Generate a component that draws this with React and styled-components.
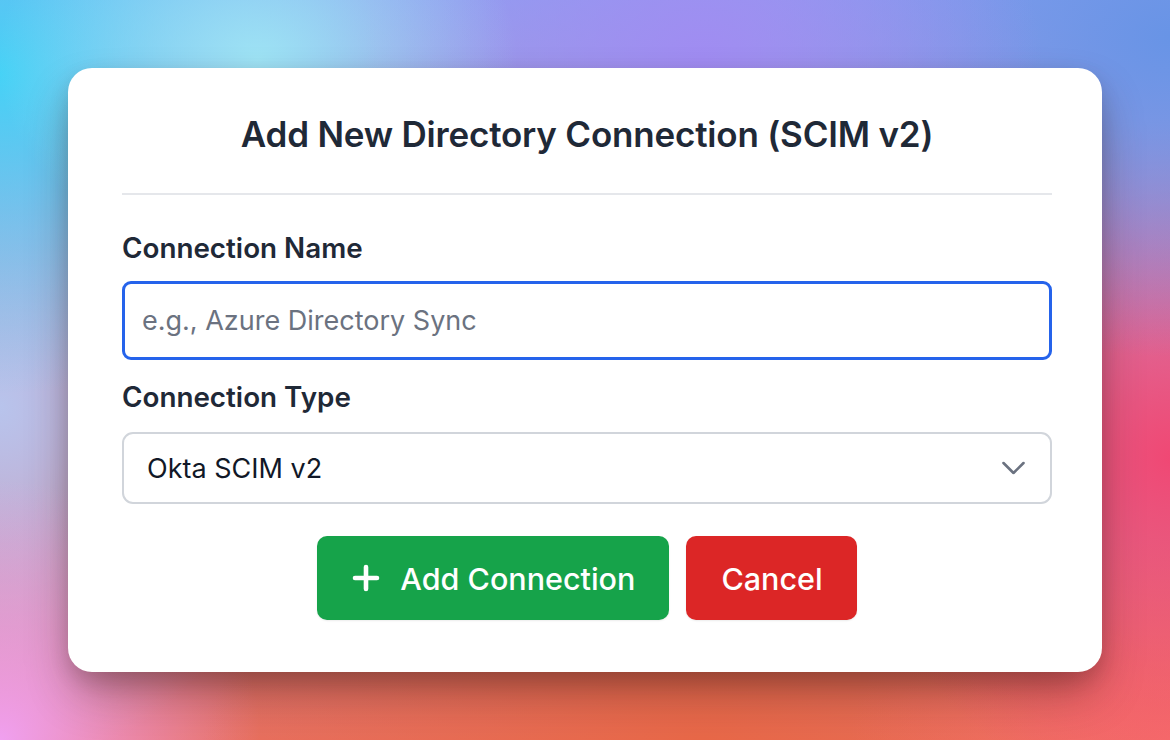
import React from 'react';
import styled, { createGlobalStyle } from 'styled-components';

const GlobalStyle = createGlobalStyle`
html, body {
    margin: 0;
    padding: 0;
    height: 100%;
}
body {
    font-family: "Inter", "Noto Sans", sans-serif;
    -webkit-font-smoothing: antialiased;
}
#root {
    height: 100%;
}
`;

const Backdrop = styled.div`
box-sizing: border-box;
width: 1170px;
height: 740px;
padding: 68px 68px 0 68px;
overflow: hidden;
background:
    radial-gradient(ellipse 260px 200px at 22% 8%, rgba(160, 230, 245, 0.95), rgba(160, 230, 245, 0) 100%),
    radial-gradient(ellipse 380px 320px at 0% 10%, rgba(70, 210, 246, 1), rgba(70, 210, 246, 0) 100%),
    radial-gradient(ellipse 340px 260px at 60% 8%, rgba(160, 140, 242, 1), rgba(160, 140, 242, 0) 100%),
    radial-gradient(ellipse 420px 320px at 100% 5%, rgba(104, 148, 230, 1), rgba(104, 148, 230, 0) 100%),
    radial-gradient(ellipse 320px 340px at 100% 62%, rgba(240, 72, 116, 1), rgba(240, 72, 116, 0) 100%),
    radial-gradient(ellipse 320px 200px at 100% 100%, rgba(246, 110, 104, 1), rgba(246, 110, 104, 0) 100%),
    radial-gradient(ellipse 500px 220px at 60% 100%, rgba(232, 104, 72, 1), rgba(232, 104, 72, 0) 100%),
    radial-gradient(ellipse 260px 260px at 0% 100%, rgba(240, 160, 240, 1), rgba(240, 160, 240, 0) 100%),
    radial-gradient(ellipse 300px 360px at 0% 55%, rgba(184, 196, 236, 1), rgba(184, 196, 236, 0) 100%),
    linear-gradient(180deg, #8fa0ee 0%, #c890c0 50%, #e87060 100%);
`;

const Card = styled.div`
box-sizing: border-box;
width: 1034px;
background: #ffffff;
border-radius: 24px;
padding: 46px 50px 52px 54px;
box-shadow: 0 24px 48px -8px rgba(60, 20, 10, 0.45), 0 8px 20px rgba(0, 0, 0, 0.12);
`;

const Title = styled.h1`
margin: 0;
font-size: 35px;
line-height: 40px;
font-weight: 600;
color: #1f2937;
text-align: center;
letter-spacing: -0.2px;
`;

const Divider = styled.hr`
border: none;
height: 2px;
background: #e5e7eb;
margin: 39px 0 38px;
`;

const Label = styled.label`
display: block;
font-size: 27.8px;
line-height: 30px;
font-weight: 600;
color: #1f2937;
margin-bottom: ${({ gap = 20 }) => gap}px;
`;

const TextInput = styled.input`
box-sizing: border-box;
display: block;
width: 100%;
height: 79px;
padding: 0 17px;
border: 3px solid #2563eb;
border-radius: 9px;
font-family: inherit;
font-size: 27px;
color: #111827;
outline: none;
margin-bottom: 22px;

&::placeholder {
    color: #6b7280;
}
`;

const SelectWrap = styled.div`
position: relative;
margin-bottom: 32px;
`;

const Select = styled.select`
box-sizing: border-box;
display: block;
width: 100%;
height: 72px;
padding: 0 60px 0 23px;
border: 2px solid #d1d5db;
border-radius: 11px;
background: #ffffff;
font-family: inherit;
font-size: 27px;
color: #111827;
appearance: none;
-webkit-appearance: none;
outline: none;
`;

const Chevron = styled.svg`
position: absolute;
right: 27px;
top: 50%;
transform: translateY(-50%);
pointer-events: none;
`;

const Actions = styled.div`
display: flex;
justify-content: center;
gap: 17px;
`;

const Button = styled.button`
display: inline-flex;
align-items: center;
gap: 20px;
height: 84px;
padding: 0 34px 0 35px;
border: none;
border-radius: 10px;
background: ${({ variant }) => (variant === 'danger' ? '#dc2626' : '#16a34a')};
color: #ffffff;
font-family: inherit;
font-size: 30.5px;
font-weight: 500;
cursor: pointer;
box-shadow: 0 1px 2px rgba(0, 0, 0, 0.08);
`;

const PlusIcon = () => (
    <svg width="28" height="28" viewBox="0 0 28 28" fill="none">
        <path d="M14 3v22M3 14h22" stroke="#ffffff" strokeWidth="4.6" strokeLinecap="round" />
    </svg>
);

export default function App() {
    return (
        <>
            <GlobalStyle />
            <Backdrop>
                <Card>
                    <Title>Add New Directory Connection (SCIM v2)</Title>
                    <Divider />
                    <Label htmlFor="conn-name" gap={18}>Connection Name</Label>
                    <TextInput id="conn-name" placeholder="e.g., Azure Directory Sync" />
                    <Label htmlFor="conn-type">Connection Type</Label>
                    <SelectWrap>
                        <Select id="conn-type" defaultValue="okta">
                            <option value="okta">Okta SCIM v2</option>
                            <option value="azure">Azure AD SCIM v2</option>
                            <option value="google">Google Workspace</option>
                        </Select>
                        <Chevron width="23" height="13" viewBox="0 0 23 13" fill="none">
                            <path d="M1.5 1.5l10 10 10-10" stroke="#6b7280" strokeWidth="2.6" strokeLinecap="round" strokeLinejoin="round" />
                        </Chevron>
                    </SelectWrap>
                    <Actions>
                        <Button>
                            <PlusIcon />
                            Add Connection
                        </Button>
                        <Button variant="danger">Cancel</Button>
                    </Actions>
                </Card>
            </Backdrop>
        </>
    );
}
